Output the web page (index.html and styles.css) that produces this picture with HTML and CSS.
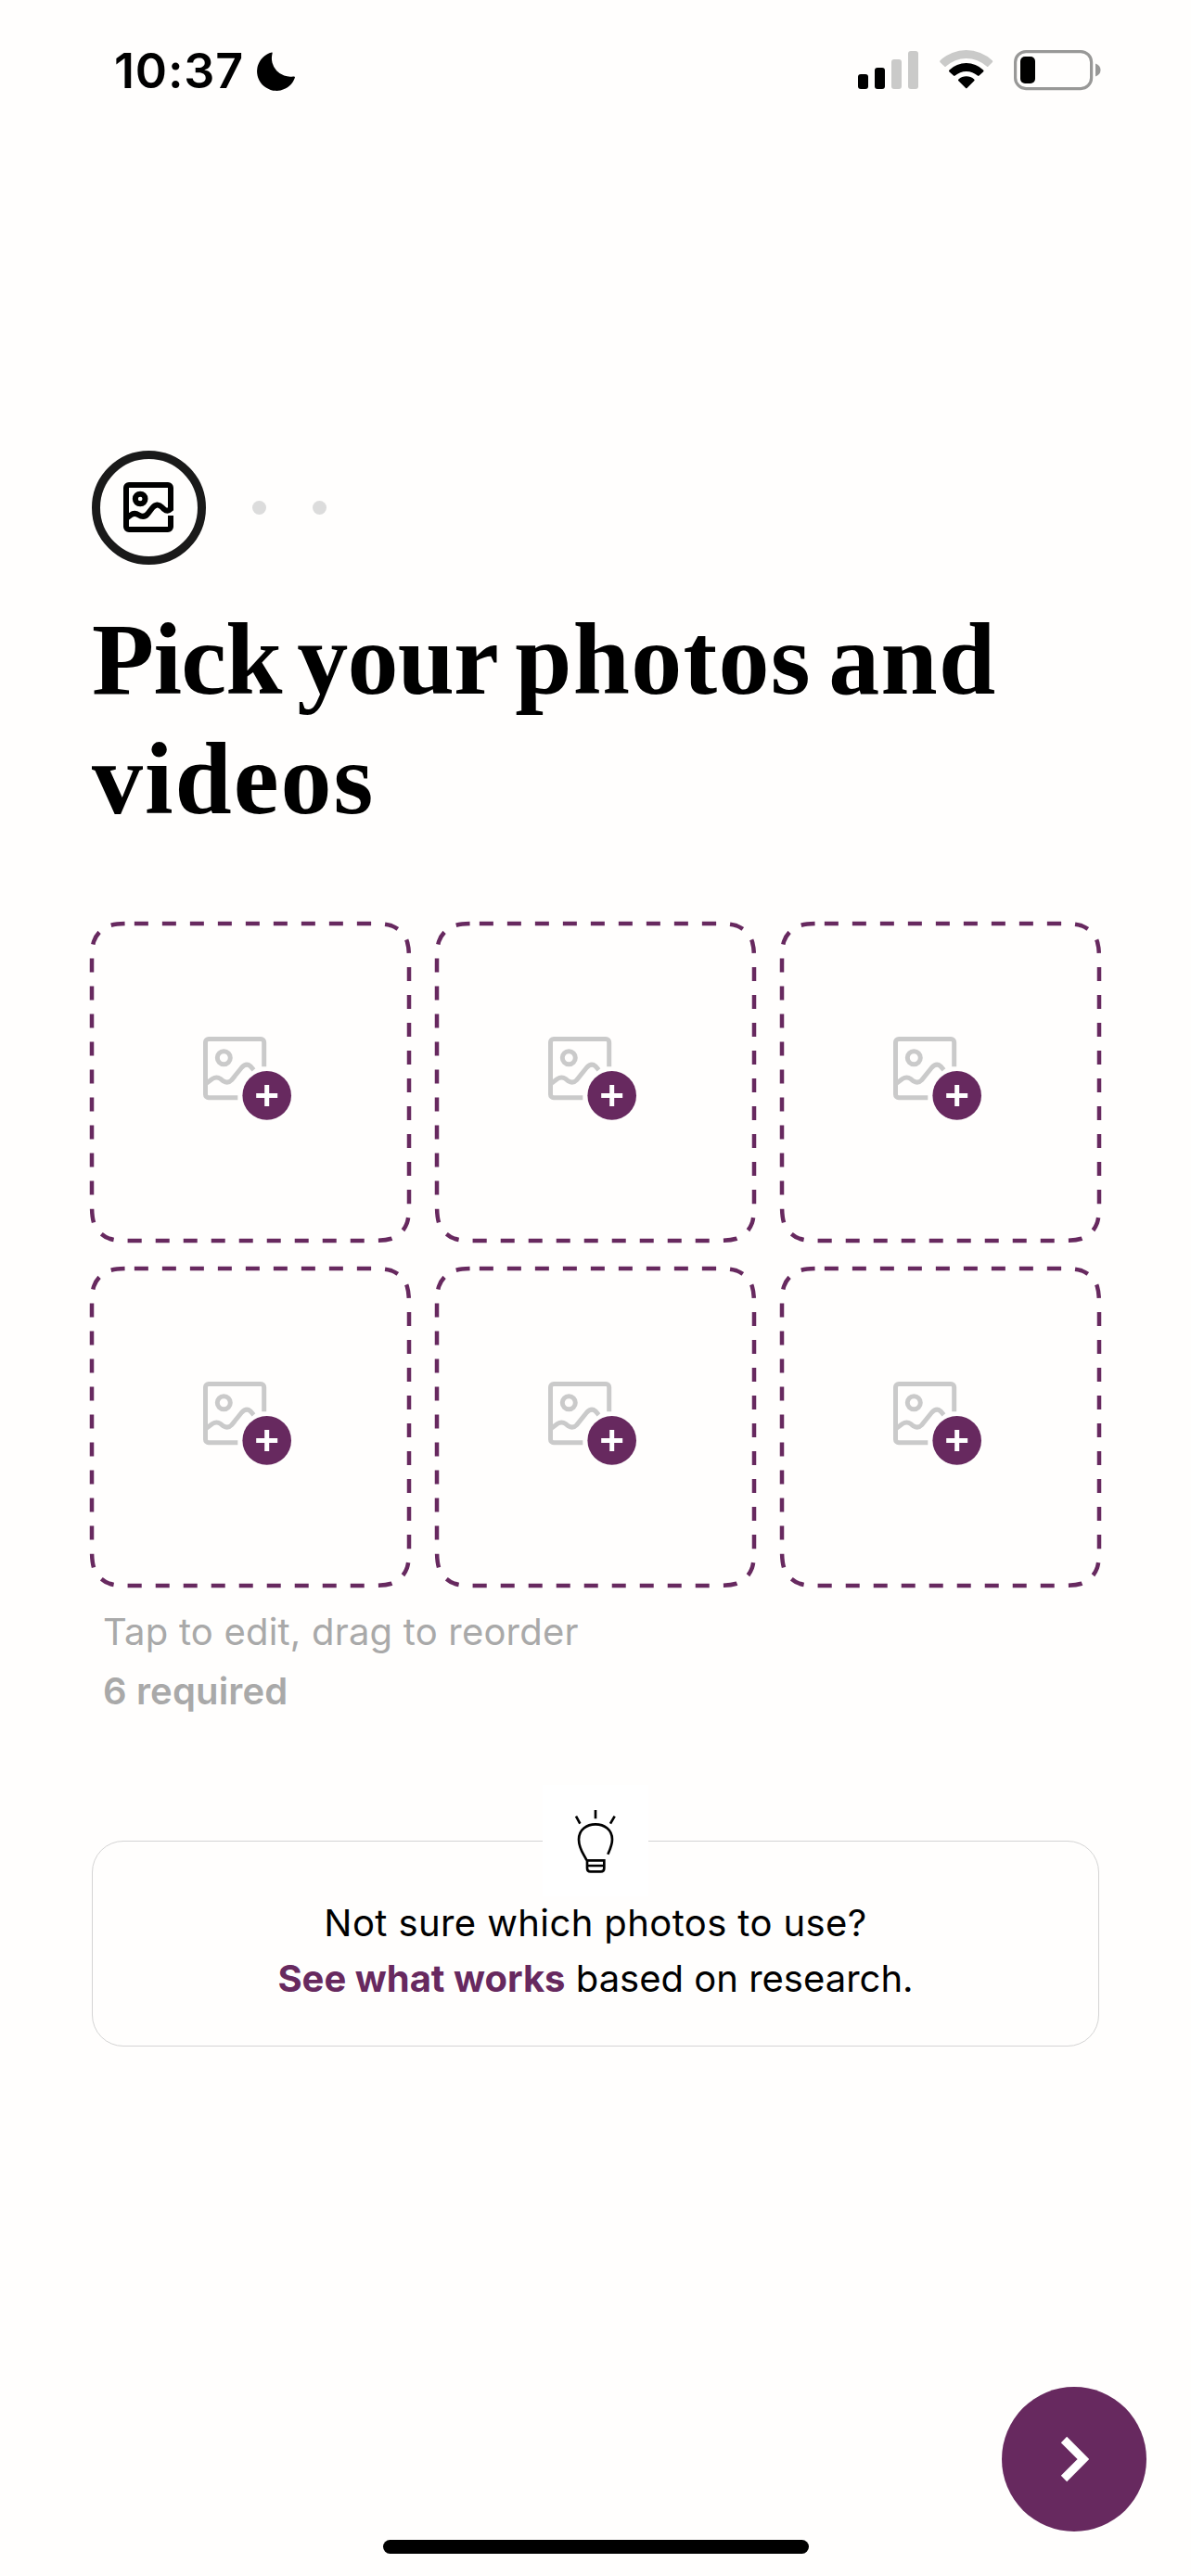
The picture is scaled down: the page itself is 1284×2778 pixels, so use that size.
FILE: index.html
```html
<!DOCTYPE html>
<html lang="en">
<head>
<meta charset="utf-8">
<title>Pick your photos and videos</title>
<link rel="stylesheet" href="styles.css">
</head>
<body>
<svg class="sprite" aria-hidden="true">
  <symbol id="slot" viewBox="0 0 342 342" overflow="visible">
    <path class="slot-outline" d="M45.86 0H296.14C309.35 0 315.95 0 323.06 2.25C330.82 5.07 336.93 11.18 339.75 18.94C342 26.05 342 32.65 342 45.86V296.14C342 309.35 342 315.95 339.75 323.06C336.93 330.82 330.82 336.93 323.06 339.75C315.95 342 309.35 342 296.14 342H45.86C32.65 342 26.05 342 18.94 339.75C11.18 336.93 5.07 330.82 2.25 323.06C0 315.95 0 309.35 0 296.14V45.86C0 32.65 0 26.05 2.25 18.94C5.07 11.18 11.18 5.07 18.94 2.25C26.05 0 32.65 0 45.86 0Z"/>
    <g class="slot-picture">
      <path d="M157.3 187.8H126a3.5 3.5 0 0 1-3.5-3.5V128a3.5 3.5 0 0 1 3.5-3.5h56.2a3.5 3.5 0 0 1 3.5 3.5v26.3"/>
      <circle cx="142.3" cy="144.7" r="7"/>
      <path d="M123.5 172.3l6.3-4.8q4.700-3 9 0l3 2.400q5 3 9-1.300l10.700-13.300q5-5.500 9.500-1.500l3.500 4"/>
    </g>
    <circle class="slot-badge" cx="188.700" cy="185.400" r="26.300"/>
    <path class="slot-plus" d="M188.700 174v23M177.200 185.500h23"/>
  </symbol>
</svg>
<div class="screen">
  <header class="status">
    <span class="clock">10:37</span>
    <svg class="moon" width="42" height="42" viewBox="0 0 42 42"><path d="M16 .5A21 21 0 1 0 41 27.500Q41 26 39 26.500A20 20 0 0 1 16.500 2Q17 0 16 .5Z"/></svg>
    <svg class="signal" width="66" height="42" viewBox="0 0 66 42"><rect y="25" width="11" height="16" rx="3"/><rect x="18" y="18" width="11" height="23" rx="3"/><g fill="#cacac9"><rect x="36" y="9" width="11" height="32" rx="3"/><rect x="54" width="11" height="41" rx="3"/></g></svg>
    <svg class="wifi" width="58" height="42" viewBox="0 0 58 42"><path fill="#cacac9" d="M.6 13.200a1.500 1.500 0 0 1 0-2A41 41 0 0 1 56.800 11.200a1.500 1.500 0 0 1 0 2L52.500 17.600a1.200 1.200 0 0 1-1.800 0A32 32 0 0 0 6.900 17.600a1.200 1.200 0 0 1-1.800 0Z"/><path d="M10.500 23.400a1.300 1.300 0 0 1 0-2A26.500 26.500 0 0 1 47 21.400a1.300 1.300 0 0 1 0 2L42.600 27.600a1.200 1.200 0 0 1-1.700 0A18 18 0 0 0 16.700 27.600a1.200 1.200 0 0 1-1.700 0ZM20.400 33.200a1.200 1.200 0 0 1 0-1.800A12.500 12.500 0 0 1 37.200 31.400a1.200 1.200 0 0 1 0 1.800L29.700 40.800a1.200 1.200 0 0 1-1.800 0Z"/></svg>
    <svg class="battery" width="95" height="44" viewBox="0 0 95 44"><rect x="1.600" y="1.600" width="82" height="40" rx="11.500" fill="none" stroke="#989897" stroke-width="3.200"/><rect x="7" y="7" width="16" height="29" rx="5"/><path fill="#989897" d="M88 14.500q5.500 2 5.500 7t-5.500 7Z"/></svg>
  </header>
  <main>
    <div class="steps">
      <span class="step-current"><svg width="54" height="54" viewBox="159 150 162 162"><path d="M170 266L182 257Q195 247 208 256Q226 268 239 251L252 234Q268 214 284 231L290 237Q302 247 312 237V168a9 9 0 0 0-9-9H177a9 9 0 0 0-9 9V294a9 9 0 0 0 9 9H303a9 9 0 0 0 9-9V258"/><circle cx="213.500" cy="204" r="16"/></svg></span>
      <i class="dot"></i><i class="dot"></i>
    </div>
    <h1><span class="lead">Pick your</span> photos and<br><span class="second">videos</span></h1>
    <div class="grid">
      <svg class="slot"><use href="#slot"/></svg><svg class="slot"><use href="#slot"/></svg><svg class="slot"><use href="#slot"/></svg>
      <svg class="slot"><use href="#slot"/></svg><svg class="slot"><use href="#slot"/></svg><svg class="slot"><use href="#slot"/></svg>
    </div>
    <p class="hint">Tap to edit, drag to reorder</p>
    <p class="required">6 required</p>
    <section class="tip">
      <span class="bulb"><svg width="114" height="120" viewBox="75 14 342 360"><path d="M246 95V123M183 115L196 139M308 115L294 139M217 257C211 242 192 222 192 190C192 158 218 141 246 141C274 141 300 158 300 190C300 208 293 222 286 238M219 258H274V283Q274 294 263 294H230Q219 294 219 283ZM219 275H274"/></svg></span>
      <p class="question">Not sure which photos to use?</p>
      <p class="answer"><b>See what works</b> based on research.</p>
    </section>
  </main>
  <footer>
    <button class="next" aria-label="Next"><svg width="32" height="50" viewBox="0 0 32 50"><path d="M5 4L26 25L5 46"/></svg></button>
    <div class="home"></div>
  </footer>
</div>
</body>
</html>
```
FILE: styles.css
```css
* { box-sizing: border-box; margin: 0; padding: 0; }
body { background: #fffefd; color: #000; font-family: Inter, sans-serif; }
.sprite { position: absolute; width: 0; height: 0; }
.screen { width: 1284px; height: 2778px; display: flex; flex-direction: column; overflow: hidden; }
svg { display: block; flex: none; }
.status { height: 485px; padding: 54px 90px 0 123px; display: flex; align-items: flex-start; }
.clock { flex: none; width: 154px; font-size: 52px; font-weight: 600; line-height: 46px; letter-spacing: .8px; white-space: nowrap; }
.moon { margin-top: 2px; }
.signal { margin: 1px 22px 0 606px; }
.wifi { margin-right: 22px; }
main { padding: 0 99px; }
.steps { display: flex; align-items: center; height: 124px; }
.step-current { width: 123px; height: 123px; border: 9px solid #1a1a1a; border-radius: 50%; display: grid; place-items: center; margin-right: 50px; }
.step-current svg { fill: none; stroke: #000; stroke-width: 18; margin-right: 1px; }
.dot { width: 15px; height: 15px; border-radius: 50%; background: #dcdcdc; margin-right: 50px; }
h1 { font: 700 110px/129px "Liberation Serif", serif; letter-spacing: 1.3px; word-spacing: -10.5px; margin-top: 38px; white-space: nowrap; }
.lead { letter-spacing: -.8px; word-spacing: -10px; }
.second { letter-spacing: 2px; }
.grid { display: grid; grid-template-columns: repeat(3, 342px); gap: 30px; margin-top: 91px; }
.slot { width: 342px; height: 342px; overflow: visible; }
.slot-outline { fill: none; stroke: #67295f; stroke-width: 4.5; stroke-dasharray: 15; }
.slot-picture { fill: none; stroke: #cacaca; stroke-width: 5; }
.slot-badge { fill: #67295f; }
.slot-plus { stroke: #fff; stroke-width: 5; }
.hint, .required { padding-left: 12px; font-size: 40px; line-height: 64px; color: #a9a9a9; white-space: nowrap; }
.hint { margin-top: 18px; font-weight: 400; letter-spacing: .2px; }
.required { font-weight: 600; letter-spacing: .15px; }
.tip { height: 222px; margin-top: 129px; border: 1px solid #d4d4d4; border-radius: 34px; display: flex; flex-direction: column; align-items: center; font-size: 40px; line-height: 60px; white-space: nowrap; }
.bulb { background: #fff; margin-top: -61px; flex: none; }
.bulb svg { fill: none; stroke: #000; stroke-width: 8; }
.question { margin-top: -1px; letter-spacing: .4px; }
.answer b { color: #67295f; font-weight: 700; }
footer { margin-top: auto; display: flex; flex-direction: column; }
.next { align-self: flex-end; width: 156px; height: 156px; margin-right: 48px; border: 0; border-radius: 50%; background: #67295f; display: grid; place-items: center; }
.next svg { fill: none; stroke: #fff; stroke-width: 9; }
.home { width: 459px; height: 15px; border-radius: 8px; background: #000; margin: 9px 0 24px 413px; }
```
